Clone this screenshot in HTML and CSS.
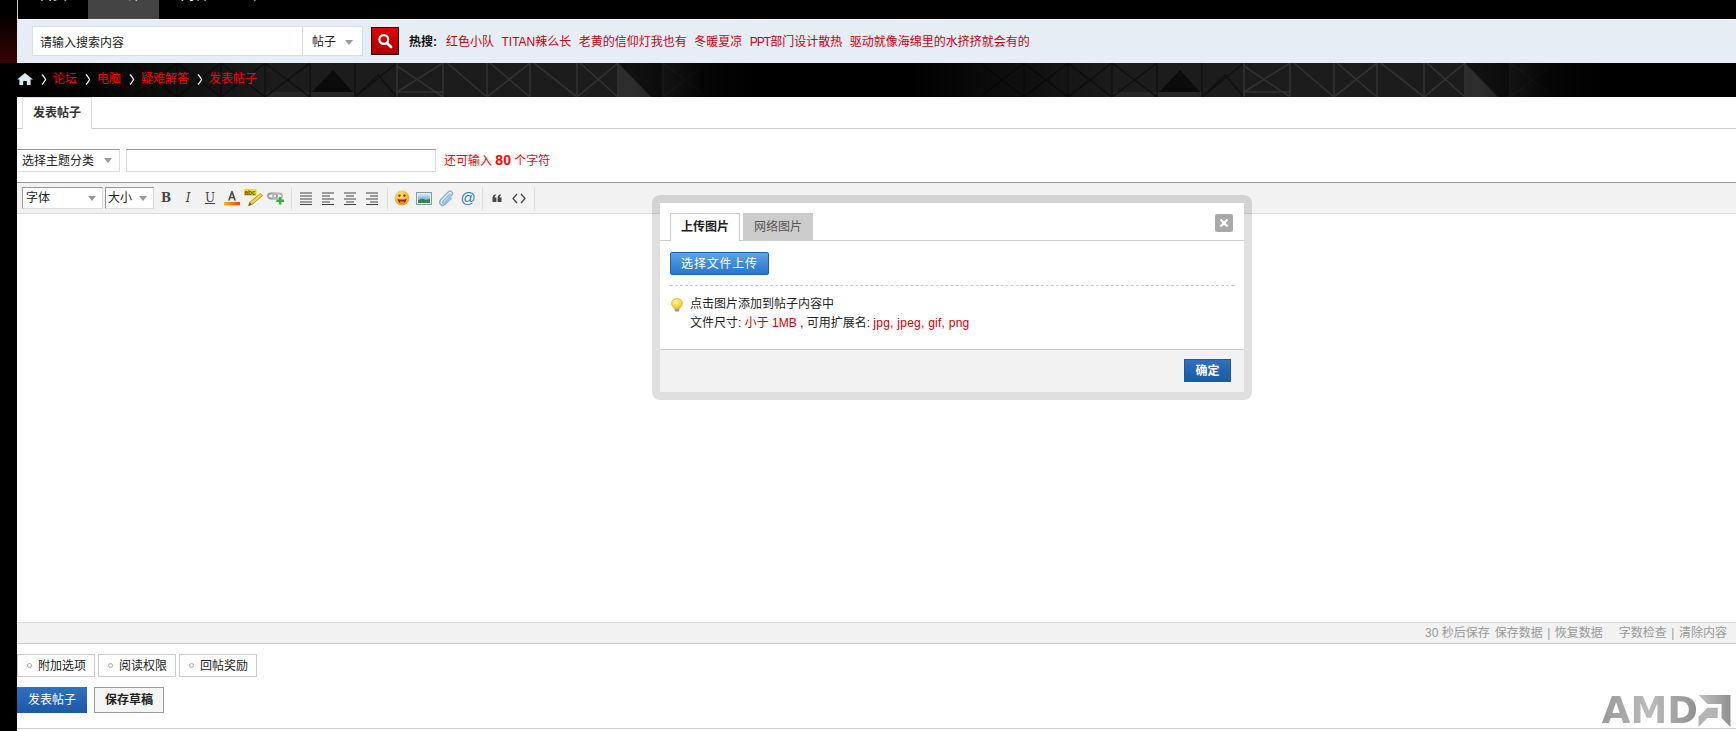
FILE: index.html
```html
<!DOCTYPE html>
<html lang="zh-CN">
<head>
<meta charset="utf-8">
<title>发表帖子</title>
<link rel="stylesheet" href="styles.css">
</head>
<body>
<header class="top">
  <div class="strip"></div>
  <div class="topmain">
    <nav class="nav">
      <a class="nav-item"><span>首页</span></a>
      <a class="nav-item active"><span>论坛</span></a>
      <a class="nav-item"><span>问答</span></a>
      <a class="nav-item"><span>社区</span></a>
    </nav>
    <div class="searchbar">
      <div class="searchbox">
        <div class="search-input">请输入搜索内容</div>
        <div class="search-type">帖子<i class="caret caret-type"></i></div>
      </div>
      <button class="search-btn" aria-label="搜索">
        <svg width="16" height="16" viewBox="0 0 16 16"><circle cx="6.8" cy="6.5" r="4.4" fill="none" stroke="#fff" stroke-width="2.2"/><path d="M10 10l4 4" stroke="#fff" stroke-width="2.8" stroke-linecap="round"/></svg>
      </button>
      <strong class="hot-label">热搜:</strong>
      <div class="hot-links">
        <a>红色小队</a><a>TITAN辣么长</a><a>老黄的信仰灯我也有</a><a>冬暖夏凉</a><a><span class="tight">PPT</span>部门设计散热</a><a>驱动就像海绵里的水挤挤就会有的</a>
      </div>
    </div>
  </div>
</header>

<div class="crumbs">
  <svg class="crumbs-bg" width="1736" height="34" viewBox="0 0 1736 34" aria-hidden="true">
    <defs>
      <linearGradient id="fade" gradientUnits="userSpaceOnUse" x1="60" x2="760" y1="0" y2="0">
        <stop offset="0" stop-color="#000"/>
        <stop offset="0.3" stop-color="#fff"/>
        <stop offset="0.82" stop-color="#fff"/>
        <stop offset="0.92" stop-color="#333"/>
        <stop offset="1" stop-color="#000"/>
      </linearGradient>
      <mask id="tilemask" maskUnits="userSpaceOnUse" x="0" y="0" width="900" height="34"><rect x="0" y="0" width="900" height="34" fill="url(#fade)"/></mask>
      <g id="tile" mask="url(#tilemask)">
        <rect x="60" y="0" width="700" height="34" fill="#1c1c1c"/>
        <rect x="265" y="29" width="90" height="5" fill="#262626"/>
        <path d="M618 0h45v34h-12L618 0z" fill="#111"/>
        <path d="M618 0L651 34H618z" fill="#2d2d2d"/>
        <path d="M312 29L333 7L353 29z" fill="#0b0b0b"/>
        <g fill="none" stroke="#101010" stroke-width="1.5">
          <path d="M133 0L177 34M177 0L133 34M177 0V34M177 0L221 34M221 0L177 34M221 0V34M221 0L265 34M265 0L221 34M265 0V34"/>
          <path d="M265 0L310 34M310 0L265 34M310 0V34M355 0V34"/>
          <path d="M355 34L378 12L397 34M397 0L355 34"/>
        </g>
        <g fill="none" stroke="#323232" stroke-width="1.6">
          <path d="M397 0V34M397 29H443M397 3L443 34M443 0L397 29"/>
          <path d="M443 0V34M447 0L487 34"/>
          <path d="M487 0V34M487 34L530 0M490 0L530 34"/>
          <path d="M530 0V34M534 0L577 34"/>
          <path d="M577 0V34M577 34L618 0M580 0L618 34M618 0V34"/>
        </g>
        <g fill="none" stroke="#262626" stroke-width="1.6">
          <path d="M663 0V34M663 34L707 0M663 0L707 34M707 0V34"/>
        </g>
      </g>
    </defs>
    <use href="#tile"/>
    <use href="#tile" x="847"/>
  </svg>
  <a class="crumb-home" aria-label="首页">
    <svg width="16" height="12" viewBox="0 0 16 12"><path d="M8 0L16 6.4H13.6V12H9.8V8H6.2V12H2.4V6.4H0z" fill="#dbe9f2"/></svg>
  </a>
  <svg class="chev" width="6" height="11" viewBox="0 0 6 11"><path d="M1 0.5C3 2.5 3.6 4 4.6 5.5C3.6 7 3 8.5 1 10.5" fill="none" stroke="#fff" stroke-width="1.3"/></svg>
  <a class="crumb">论坛</a>
  <svg class="chev" width="6" height="11" viewBox="0 0 6 11"><path d="M1 0.5C3 2.5 3.6 4 4.6 5.5C3.6 7 3 8.5 1 10.5" fill="none" stroke="#fff" stroke-width="1.3"/></svg>
  <a class="crumb">电脑</a>
  <svg class="chev" width="6" height="11" viewBox="0 0 6 11"><path d="M1 0.5C3 2.5 3.6 4 4.6 5.5C3.6 7 3 8.5 1 10.5" fill="none" stroke="#fff" stroke-width="1.3"/></svg>
  <a class="crumb">疑难解答</a>
  <svg class="chev" width="6" height="11" viewBox="0 0 6 11"><path d="M1 0.5C3 2.5 3.6 4 4.6 5.5C3.6 7 3 8.5 1 10.5" fill="none" stroke="#fff" stroke-width="1.3"/></svg>
  <a class="crumb">发表帖子</a>
</div>

<main class="main">
  <div class="tabs">
    <div class="tab">发表帖子</div>
  </div>

  <div class="subject">
    <div class="select topic">选择主题分类<i class="caret"></i></div>
    <div class="subject-input"></div>
    <div class="hint">还可输入 <b>80</b> 个字符</div>
  </div>

  <section class="editor">
    <div class="toolbar">
      <div class="select fontsel">字体<i class="caret"></i></div>
      <div class="select sizesel">大小<i class="caret"></i></div>
      <div class="tb serif bold">B</div>
      <div class="tb serif italic">I</div>
      <div class="tb serif under">U</div>
      <div class="tb">
        <svg width="18" height="18" viewBox="0 0 18 18">
          <defs><linearGradient id="fc" x1="0" x2="1" y1="0" y2="0"><stop offset="0" stop-color="#f8b400"/><stop offset="1" stop-color="#e8461a"/></linearGradient></defs>
          <path d="M5 11.5L8.4 2h1.2L13 11.5h-1.8l-.7-2.2H7.4l-.7 2.2zM7.9 7.9h2.1L9 4.8z" fill="#444"/>
          <rect x="1" y="13" width="16" height="3.4" fill="url(#fc)"/>
        </svg>
      </div>
      <div class="tb">
        <svg width="20" height="18" viewBox="0 0 20 18">
          <rect x="0" y="0" width="12.5" height="7" fill="#f3e400"/>
          <text class="abc" x="0.5" y="6">abc</text>
          <path d="M16.4 4.5L18.6 6.6L8 15.5L4.6 16.6L5.8 13.2z" fill="#f3d23a" stroke="#a58a1a" stroke-width="0.8"/>
          <path d="M5.8 13.2L4.6 16.6L8 15.5z" fill="#555"/>
        </svg>
      </div>
      <div class="tb">
        <svg width="18" height="16" viewBox="0 0 18 16">
          <rect x="1" y="3.5" width="9" height="5" rx="2.5" fill="none" stroke="#9a9a9a" stroke-width="1.8"/>
          <rect x="6" y="3.5" width="9" height="5" rx="2.5" fill="none" stroke="#b5b5b5" stroke-width="1.8"/>
          <path d="M12 7h2.4v2.6H17V12h-2.6v2.6H12V12H9.4V9.6H12z" fill="#35b53a"/>
        </svg>
      </div>
      <div class="tb-sep"></div>
      <div class="tb"><svg class="al" width="14" height="13" viewBox="0 0 14 13"><path d="M1 1h12M1 4h12M1 7h12M1 10h12M1 12.5h12"/></svg></div>
      <div class="tb"><svg class="al" width="14" height="13" viewBox="0 0 14 13"><path d="M1 1h12M1 4h8M1 7h12M1 10h8M1 12.5h12"/></svg></div>
      <div class="tb"><svg class="al" width="14" height="13" viewBox="0 0 14 13"><path d="M1 1h12M3 4h8M1 7h12M3 10h8M1 12.5h12"/></svg></div>
      <div class="tb"><svg class="al" width="14" height="13" viewBox="0 0 14 13"><path d="M1 1h12M5 4h8M1 7h12M5 10h8M1 12.5h12"/></svg></div>
      <div class="tb-sep"></div>
      <div class="tb">
        <svg width="16" height="16" viewBox="0 0 16 16">
          <defs><radialGradient id="em" cx="0.4" cy="0.3" r="0.8"><stop offset="0" stop-color="#ffe27a"/><stop offset="1" stop-color="#ee9a12"/></radialGradient></defs>
          <circle cx="8" cy="8" r="7.4" fill="url(#em)"/>
          <circle cx="5.5" cy="5.6" r="1.2" fill="#6b3500"/><circle cx="10.5" cy="5.6" r="1.2" fill="#6b3500"/>
          <path d="M3.5 8.4C5 10 11 10 12.5 8.4C12.2 12.4 9.8 13.6 8 13.6S3.8 12.4 3.5 8.4z" fill="#9a2a10"/>
          <path d="M6 11.5h4v1.4C9 13.7 7 13.7 6 12.9z" fill="#f08a6a"/>
        </svg>
      </div>
      <div class="tb">
        <svg width="16" height="13" viewBox="0 0 16 13">
          <defs><linearGradient id="sky" x1="0" x2="0" y1="0" y2="1"><stop offset="0" stop-color="#cfe6f8"/><stop offset="1" stop-color="#4a8fc8"/></linearGradient></defs>
          <rect x="0.5" y="0.5" width="15" height="12" fill="#eef1f4" stroke="#8a97a3"/>
          <rect x="2" y="2" width="12" height="9" fill="url(#sky)"/>
          <path d="M2 8.5L6 6.5L10 8L14 7V11H2z" fill="#3f7f50"/>
        </svg>
      </div>
      <div class="tb">
        <svg width="16" height="18" viewBox="0 0 16 18"><path d="M12.5 4.5L5 12.2C3.8 13.5 5.2 15 6.5 13.8L13.6 6.2C15.8 3.7 12.6 0.6 10.2 3L2.9 10.6C-0.2 14 4 18.4 7.5 15L13.5 9" fill="none" stroke="#8db4dc" stroke-width="1.5"/></svg>
      </div>
      <div class="tb at">@</div>
      <div class="tb-sep sep-b"></div>
      <div class="tb quote">
        <svg width="10" height="8" viewBox="0 0 10 8"><path d="M0.5 8V4.2C0.5 2 1.6 0.8 3.8 0.3V1.6C2.9 2 2.6 2.5 2.5 3.4H4.4V8zM5.6 8V4.2C5.6 2 6.7 0.8 8.9 0.3V1.6C8 2 7.7 2.5 7.6 3.4H9.5V8z" fill="#444"/></svg>
      </div>
      <div class="tb">
        <svg width="14" height="11" viewBox="0 0 14 11"><path d="M5 1L1 5.5L5 10M9 1L13 5.5L9 10" fill="none" stroke="#444" stroke-width="1.3"/></svg>
      </div>
      <div class="tb-sep sep-c"></div>
    </div>
    <div class="editor-body"></div>
    <div class="statusbar">
      <span>30 秒后保存</span><span class="st-gap">保存数据</span><i class="pipe">|</i><span>恢复数据</span><span class="st-wide">字数检查</span><i class="pipe">|</i><span>清除内容</span>
    </div>
  </section>

  <div class="options">
    <div class="option"><i class="dot"></i>附加选项</div>
    <div class="option"><i class="dot"></i>阅读权限</div>
    <div class="option"><i class="dot"></i>回帖奖励</div>
  </div>

  <div class="actions">
    <button class="btn-post">发表帖子</button>
    <button class="btn-draft">保存草稿</button>
    <div class="amd">
      <span class="amd-text">AMD</span>
      <svg width="33" height="32" viewBox="0 0 100 100">
        <defs><linearGradient id="amdg" x1="0" x2="1" y1="0" y2="0"><stop offset="0" stop-color="#c4c4c4"/><stop offset="1" stop-color="#8f8f8f"/></linearGradient></defs>
        <path d="M0 0H100V100L72 72V28H28z" fill="url(#amdg)"/>
        <path d="M28 40H60V72H28L0 100V68z" fill="#b4b4b4"/>
      </svg>
    </div>
  </div>
</main>

<div class="dialog" role="dialog">
  <div class="dlg-inner">
    <div class="dlg-head">
      <div class="dlg-tab on">上传图片</div>
      <div class="dlg-tab">网络图片</div>
      <div class="dlg-close">
        <svg width="10" height="10" viewBox="0 0 10 10"><path d="M1.5 1.5L8.5 8.5M8.5 1.5L1.5 8.5" stroke="#fff" stroke-width="2.4"/></svg>
      </div>
    </div>
    <div class="dlg-body">
      <button class="upload">选择文件上传</button>
      <div class="dlg-rule"></div>
      <div class="tips">
        <svg class="bulb" width="12" height="14" viewBox="0 0 12 14">
          <defs><radialGradient id="bl" cx="0.4" cy="0.35" r="0.7"><stop offset="0" stop-color="#fff7a8"/><stop offset="1" stop-color="#f3c200"/></radialGradient></defs>
          <path d="M6 0.5C9 0.5 11.5 2.6 11.5 5.4C11.5 7.6 9.6 8.6 8.8 10.6H3.2C2.4 8.6 0.5 7.6 0.5 5.4C0.5 2.6 3 0.5 6 0.5z" fill="url(#bl)" stroke="#d9a900" stroke-width="0.6"/>
          <rect x="3.6" y="10.8" width="4.8" height="2.8" rx="1" fill="#9a9a9a"/>
        </svg>
        <div class="tips-text">
          <p>点击图片添加到帖子内容中</p>
          <p>文件尺寸: <em>小于 1MB</em> , 可用扩展名: <em class="exts">jpg, jpeg, gif, png</em></p>
        </div>
      </div>
    </div>
    <div class="dlg-foot">
      <button class="ok">确定</button>
    </div>
  </div>
</div>
</body>
</html>
```

FILE: styles.css
```css
* { box-sizing: border-box; }
html, body { margin: 0; padding: 0; }
body {
  position: relative;
  width: 1736px;
  height: 731px;
  overflow: hidden;
  background: #000;
  color: #333;
  font: 12px/1.5 "Liberation Sans", "Noto Sans CJK SC", sans-serif;
}
button { font: inherit; cursor: pointer; padding: 0; }
p { margin: 0; }
em { font-style: normal; color: #c00; }
i { font-style: normal; }

.top { display: flex; height: 63px; }
.strip { width: 17px; background: linear-gradient(#000 15%, #380404); }
.topmain { flex: 1; }

.nav {
  display: flex;
  height: 19px;
  overflow: hidden;
  background: #000;
  border-left: 1px solid #ccc;
}
.nav-item {
  width: 71px;
  height: 19px;
  color: #fff;
  font-size: 14px;
  line-height: 14px;
  text-align: center;
}
.nav-item:first-child { width: 70px; }
.nav-item span { display: block; margin-top: -13px; }
.nav-item.active { background: #444; }

.searchbar {
  display: flex;
  align-items: center;
  height: 44px;
  padding: 0 0 1px 15px;
  background: #e6edf5;
  border-top: 1px solid #f4f7fa;
}
.searchbox {
  display: flex;
  width: 331px;
  height: 30px;
  background: #fff;
  border: 1px solid #d3e0ea;
}
.search-input { width: 269px; padding-left: 7px; line-height: 33px; color: #222; }
.search-type {
  display: flex;
  align-items: center;
  flex: 1;
  padding: 1px 0 0 9px;
  border-left: 1px solid #d3e0ea;
  color: #222;
}
.caret {
  display: block;
  width: 0;
  height: 0;
  margin-left: auto;
  border: 4px solid transparent;
  border-top: 5px solid #999;
  border-bottom: 0;
}
.caret-type { margin: 1px 0 0 9px; }
.search-btn {
  display: flex;
  align-items: center;
  justify-content: center;
  width: 28px;
  height: 28px;
  margin-left: 8px;
  border: 1px solid #300;
  background: linear-gradient(#e00000, #a80000);
}
.hot-label { padding-top: 1px; margin-left: 10px; color: #111; }
.hot-links { display: flex; gap: 7.5px; padding-top: 1px; margin-left: 9px; }
.hot-links a { color: #c8000f; }
.tight { letter-spacing: -1px; }

.crumbs {
  position: relative;
  display: flex;
  align-items: center;
  height: 34px;
  padding: 0 0 2px 17px;
  background: #000;
  color: #f00;
}
.crumbs-bg { position: absolute; left: 0; top: 0; }
.crumb-home { position: relative; display: flex; }
.chev { position: relative; margin: 1px 6px 0 8px; }
.crumb { position: relative; color: #f00; }

.main {
  display: flex;
  flex-direction: column;
  height: 634px;
  margin-left: 17px;
  background: #fff;
}
.tabs { height: 32px; padding-left: 5px; border-bottom: 1px solid #ccc; }
.tab {
  width: 70px;
  height: 32px;
  background: #fff;
  border: 1px solid #ddd;
  border-bottom: 0;
  font-weight: bold;
  line-height: 30px;
  text-align: center;
  color: #333;
}

.subject { display: flex; align-items: center; height: 23px; margin-top: 20px; }
.select {
  display: flex;
  align-items: center;
  height: 23px;
  background: #fff;
  border: 1px solid #ddd;
  border-top-color: #999;
  color: #222;
}
.topic { width: 103px; padding: 0 7px 0 5px; border-left: 0; }
.subject-input {
  width: 310px;
  height: 23px;
  margin-left: 6px;
  background: #fff;
  border: 1px solid #ddd;
  border-top-color: #999;
}
.hint { margin-left: 8px; color: #f00; }
.hint b { font-size: 14px; }

.editor { margin-top: 10px; }
.toolbar {
  display: flex;
  align-items: center;
  height: 32px;
  padding-left: 5px;
  background: #f2f2f2;
  border-top: 1px solid #999;
  border-bottom: 1px solid #ddd;
}
.fontsel, .sizesel { height: 22px; border-left-color: #999; padding: 0 6px 0 2px; }
.fontsel { width: 81px; padding-left: 3px; }
.sizesel { width: 49px; margin-left: 2px; margin-right: 1px; }
.tb {
  display: flex;
  align-items: center;
  justify-content: center;
  width: 22px;
  height: 22px;
  color: #444;
}
.serif { font: 12px "DejaVu Serif", serif; }
.bold { font-weight: bold; }
.italic { font-style: italic; }
.under { text-decoration: underline; }
.abc { font: bold 6.5px "Liberation Sans", sans-serif; fill: #5a4a00; }
.al path { fill: none; stroke: #444; stroke-width: 1; }
.at { color: #2a7fc6; font-size: 15px; }
.tb-sep { width: 1px; height: 23px; margin: 0 3px 0 4px; background: #ddd; }
.sep-b { margin: 0 3px 0 3px; }
.sep-c { margin-left: 4px; }

.editor-body { height: 408px; background: #fff; }
.statusbar {
  display: flex;
  justify-content: flex-end;
  align-items: center;
  height: 22px;
  padding-right: 9px;
  background: #f2f2f2;
  border-top: 1px solid #ddd;
  border-bottom: 1px solid #ccc;
  color: #999;
}
.st-gap { margin-left: 5px; }
.st-wide { margin-left: 16px; }
.pipe { margin: 0 4.5px; }

.options { display: flex; gap: 3px; margin-top: 10px; }
.option {
  display: flex;
  align-items: center;
  width: 78px;
  height: 23px;
  padding-left: 9px;
  border: 1px solid #ccc;
  color: #222;
}
.dot {
  width: 5px;
  height: 5px;
  margin-right: 6px;
  border-radius: 50%;
  background: #fff;
  border: 1px solid #aaa;
}

.actions {
  display: flex;
  align-items: flex-start;
  height: 42px;
  margin-top: 10px;
  border-bottom: 1px solid #ccc;
}
.btn-post {
  width: 70px;
  height: 26px;
  color: #fff;
  border: 0;
  background: linear-gradient(#2f70c0, #1c59a6);
}
.btn-draft {
  width: 70px;
  height: 26px;
  margin-left: 7px;
  color: #222;
  font-weight: bold;
  background: #f5f5f5;
  border: 1px solid #999;
}
.amd {
  display: flex;
  align-items: flex-end;
  align-self: flex-end;
  margin-left: auto;
  padding: 0 5px 1px 0;
}
.amd-text {
  font: bold 37px/32px "DejaVu Sans", sans-serif;
  background: linear-gradient(90deg, #999, #bbb 50%, #8f8f8f);
  -webkit-background-clip: text;
  background-clip: text;
  color: transparent;
}

.dialog {
  position: absolute;
  left: 652px;
  top: 195px;
  width: 600px;
  height: 205px;
  padding: 8px;
  border-radius: 8px;
  background: rgba(0, 0, 0, 0.125);
}
.dlg-inner { display: flex; flex-direction: column; height: 100%; background: #fff; }
.dlg-head {
  display: flex;
  align-items: flex-end;
  gap: 3px;
  height: 38px;
  padding-left: 10px;
  border-bottom: 1px solid #ccc;
}
.dlg-tab {
  width: 70px;
  height: 27px;
  background: #ccc;
  color: #555;
  line-height: 28px;
  text-align: center;
}
.dlg-tab.on {
  height: 28px;
  margin-bottom: -1px;
  background: #fff;
  border: 1px solid #ccc;
  border-bottom: 0;
  color: #222;
  font-weight: bold;
  line-height: 26px;
}
.dlg-close {
  display: flex;
  align-items: center;
  justify-content: center;
  align-self: flex-start;
  width: 18px;
  height: 18px;
  margin: 11px 11px 0 auto;
  border-radius: 2px;
  background: #a8a8a8;
}
.dlg-body { flex: 1; padding: 11px 10px 0; }
.upload {
  display: block;
  width: 99px;
  height: 23px;
  color: #fff;
  letter-spacing: 0.8px;
  border: 1px solid #1e62ae;
  border-radius: 2px;
  background: linear-gradient(#62a4e4, #3f8bd8 50%, #2a76cc);
}
.dlg-rule { margin-top: 10px; border-top: 1px dashed #ccc; }
.tips { display: flex; margin-top: 9px; color: #222; }
.bulb { margin: 3px 7px 0 1px; flex: none; }
.tips-text { line-height: 19px; }
.exts { letter-spacing: 0.25px; }
.dlg-foot {
  display: flex;
  justify-content: flex-end;
  align-items: flex-start;
  height: 43px;
  padding: 9px 13px 0 0;
  background: #f2f2f2;
  border-top: 1px solid #ccc;
}
.ok {
  width: 47px;
  height: 23px;
  color: #fff;
  font-weight: bold;
  border: 1px solid #1c59a6;
  background: linear-gradient(#2f70c0, #1c59a6);
}
```
